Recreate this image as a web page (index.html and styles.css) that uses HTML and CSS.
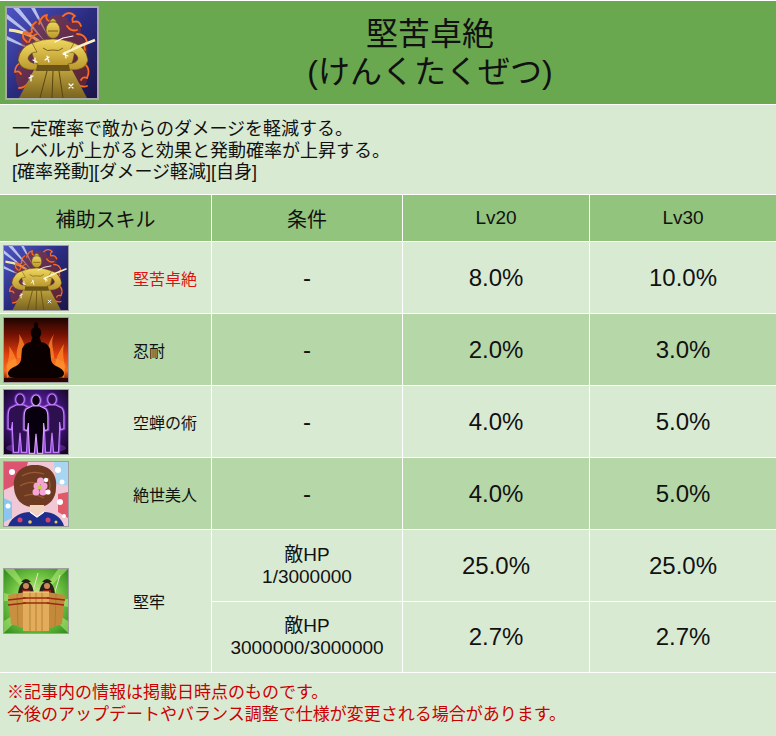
FILE: index.html
```html
<!DOCTYPE html>
<html lang="ja">
<head>
<meta charset="utf-8">
<title>堅苦卓絶</title>
<link rel="stylesheet" href="styles.css">
</head>
<body>
<svg class="defs" aria-hidden="true" width="0" height="0">
  <defs>
    <linearGradient id="nbg" x1="0" y1="0" x2="1" y2="1">
      <stop offset="0" stop-color="#4d55c4"/>
      <stop offset=".5" stop-color="#2a2b7e"/>
      <stop offset="1" stop-color="#1c1648"/>
    </linearGradient>
    <linearGradient id="ngold" x1="0" y1="0" x2="0" y2="1">
      <stop offset="0" stop-color="#f0d860"/>
      <stop offset="1" stop-color="#b8962c"/>
    </linearGradient>
    <linearGradient id="nhak" x1="0" y1="0" x2="0" y2="1">
      <stop offset="0" stop-color="#c2a63e"/>
      <stop offset="1" stop-color="#7a6420"/>
    </linearGradient>
    <linearGradient id="gnin" x1="0" y1="0" x2="0" y2="1">
      <stop offset="0" stop-color="#1c0500"/>
      <stop offset=".28" stop-color="#7a1203"/>
      <stop offset=".58" stop-color="#e2410e"/>
      <stop offset=".82" stop-color="#f56c1e"/>
      <stop offset="1" stop-color="#5a0c02"/>
    </linearGradient>
    <radialGradient id="gutsu" cx=".5" cy=".45" r=".7">
      <stop offset="0" stop-color="#7a34c0"/>
      <stop offset=".6" stop-color="#3a1470"/>
      <stop offset="1" stop-color="#14041f"/>
    </radialGradient>
    <radialGradient id="gken" cx=".5" cy=".5" r=".7">
      <stop offset="0" stop-color="#dcf8a6"/>
      <stop offset=".5" stop-color="#7ccc4a"/>
      <stop offset="1" stop-color="#2c8a1c"/>
    </radialGradient>
    <path id="fig" d="M-4 5 A4 5 0 1 1 4 5 A4 5 0 1 1 -4 5 Z M-3 10 L3 10 L9 13 Q11 15 11 21 L11 32 L8 33 L7 26 L7 34 L6 54 L1.5 54 L0 36 L-1.5 54 L-6 54 L-7 34 L-7 26 L-8 33 L-11 32 L-11 21 Q-11 15 -9 13 Z"/>
  </defs>
  <symbol id="nio" viewBox="0 0 90 90">
    <rect width="90" height="90" fill="url(#nbg)"/>
    <g fill="#dfe8ff" opacity=".75">
      <polygon points="0,6 40,40 0,11"/>
      <polygon points="6,0 40,36 12,0"/>
      <polygon points="24,0 42,30 28,0"/>
      <polygon points="0,28 30,44 0,32"/>
    </g>
    <path d="M2 22 C20 24 30 30 36 38" stroke="#f6e7a0" stroke-width="3" fill="none"/>
    <path fill="#a8300e" opacity=".45" d="M16 40 C10 30 18 18 26 22 C26 12 36 6 42 10 C48 4 60 6 62 14 C70 10 78 18 72 28 C82 32 82 46 78 52 C84 60 82 74 76 80 L14 82 C6 74 8 62 14 56 C8 50 10 44 16 40Z"/>
    <g fill="none" stroke="#ff6a1e" stroke-width="1.8" stroke-linecap="round" stroke-linejoin="round">
      <path d="M20 34 q-6 -4 -3 -10 q4 4 8 0 q-2 -6 4 -10"/>
      <path d="M32 16 q2 -8 8 -9 q-2 4 2 6"/>
      <path d="M56 8 q6 -6 12 0 q-4 2 -2 6 q6 -2 8 4"/>
      <path d="M70 26 q8 0 10 8 q-4 2 -2 8"/>
      <path d="M16 54 q-8 2 -8 10 q4 -2 6 2"/>
      <path d="M78 56 q6 6 2 14 q-4 -2 -6 2"/>
      <path d="M22 74 q-4 6 -10 6"/>
      <path d="M70 76 q6 4 10 2"/>
      <path d="M60 18 q4 6 10 4"/>
      <path d="M30 26 q-6 2 -8 8"/>
    </g>
    <path d="M28 60 L64 60 L80 90 L12 90Z" fill="url(#nhak)"/>
    <g fill="url(#ngold)" stroke="#5a4410" stroke-width=".6">
      <path d="M25 35 Q46 27 67 35 Q69 46 64 58 L30 58 Q23 46 25 35Z"/>
      <path d="M25 35 Q13 39 11 52 Q13 63 30 62 L31 56 Q21 55 21 50 Q23 44 30 44Z"/>
      <path d="M67 35 Q79 39 81 52 Q79 63 62 62 L61 56 Q71 55 71 50 Q69 44 62 44Z"/>
      <ellipse cx="46" cy="22" rx="7" ry="8.5"/>
      <path d="M42 14 Q46 7 50 14Z"/>
    </g>
    <path d="M30 57 L62 57 L63 63 L29 63Z" fill="#6a5416"/>
    <g stroke="#5a4610" stroke-width="1">
      <line x1="40" y1="63" x2="33" y2="90"/>
      <line x1="52" y1="63" x2="56" y2="90"/>
      <line x1="46" y1="63" x2="45" y2="90"/>
    </g>
    <path d="M36 40 Q40 44 46 42 Q52 44 56 40" stroke="#7a6018" fill="none"/>
    <path d="M41 23 h10" stroke="#7a5a10"/>
    <path d="M88 32 Q72 38 56 46" stroke="#f8f0c0" stroke-width="2.5" fill="none"/>
    <g stroke="#fff" stroke-width="1.2" stroke-linecap="round" fill="none">
      <path d="M38 52 l4 -3 M40 48 l2 6"/>
      <path d="M56 46 l5 2 M58 44 l1 6"/>
      <path d="M22 70 l4 -2 M24 67 l0 6"/>
      <path d="M62 80 l4 -4 M62 76 l4 4"/>
      <path d="M26 52 l4 2 M28 50 l0 5"/>
      <path d="M48 34 l8 -4 l10 -2"/>
    </g>
  </symbol>
</svg>

<div class="skill">
  <div class="head">
    <div class="hicon"><svg viewBox="0 0 90 90"><use href="#nio"/></svg></div>
    <div class="title">堅苦卓絶<br>(けんくたくぜつ)</div>
  </div>

  <div class="desc">一定確率で敵からのダメージを軽減する。<br>レベルが上がると効果と発動確率が上昇する。<br>[確率発動][ダメージ軽減][自身]</div>

  <div class="tbl">
    <div class="th">補助スキル</div>
    <div class="th">条件</div>
    <div class="th lv">Lv20</div>
    <div class="th lv">Lv30</div>

    <div class="c name">
      <span class="ico"><svg viewBox="0 0 90 90"><use href="#nio"/></svg></span>
      <span class="nm red">堅苦卓絶</span>
    </div>
    <div class="c num">-</div>
    <div class="c num">8.0%</div>
    <div class="c num">10.0%</div>

    <div class="c alt name">
      <span class="ico"><svg viewBox="0 0 64 64">
        <rect width="64" height="64" fill="url(#gnin)"/>
        <g fill="#ff8a2a" opacity=".75">
          <path d="M3 60 C1 46 7 40 5 28 C12 38 14 44 12 52Z"/>
          <path d="M60 60 C63 46 57 40 60 26 C52 38 50 46 52 54Z"/>
          <path d="M13 40 C11 30 17 26 15 16 C22 26 22 34 20 40Z"/>
          <path d="M50 40 C50 30 46 26 50 16 C43 26 43 34 45 40Z"/>
        </g>
        <ellipse cx="32" cy="48" rx="30" ry="10" fill="#ffb040" opacity=".3"/>
        <g fill="#0a0000">
          <ellipse cx="32" cy="7" rx="2.2" ry="2.8"/>
          <ellipse cx="32" cy="15" rx="5.2" ry="6.2"/>
          <path d="M28 20 L36 20 L37 24 Q44 25 46 31 L47 42 Q48 46 52 48 Q60 51 60 56 Q59 60 52 60 L12 60 Q5 60 4 56 Q4 51 12 48 Q16 46 17 42 L18 31 Q20 25 27 24 Z"/>
        </g>
        <rect y="60" width="64" height="4" fill="#2a0400"/>
      </svg></span>
      <span class="nm">忍耐</span>
    </div>
    <div class="c alt num">-</div>
    <div class="c alt num">2.0%</div>
    <div class="c alt num">3.0%</div>

    <div class="c name">
      <span class="ico"><svg viewBox="0 0 64 64">
        <rect width="64" height="64" fill="url(#gutsu)"/>
        <ellipse cx="32" cy="58" rx="30" ry="6" fill="#8a3ad8" opacity=".45"/>
        <g fill="none" stroke="#b060ff" stroke-width="3" opacity=".45">
          <use href="#fig" transform="translate(16 4) scale(1.08)"/>
          <use href="#fig" transform="translate(48 4) scale(1.08)"/>
        </g>
        <g fill="#2e1050" stroke="#c27cff" stroke-width="1.1">
          <use href="#fig" transform="translate(16 4) scale(1.08)"/>
          <use href="#fig" transform="translate(48 4) scale(1.08)"/>
        </g>
        <use href="#fig" transform="translate(32 5) scale(1.08)" fill="none" stroke="#b060ff" stroke-width="3" opacity=".5"/>
        <use href="#fig" transform="translate(32 5) scale(1.08)" fill="#08000e" stroke="#d69aff" stroke-width="1.1"/>
      </svg></span>
      <span class="nm">空蝉の術</span>
    </div>
    <div class="c num">-</div>
    <div class="c num">4.0%</div>
    <div class="c num">5.0%</div>

    <div class="c alt name">
      <span class="ico"><svg viewBox="0 0 64 64">
        <rect width="64" height="64" fill="#f0c8d6"/>
        <path d="M0 0 H24 L18 20 L0 28Z" fill="#dc5470"/>
        <path d="M64 0 V24 L52 22 L50 0Z" fill="#a8d6f2"/>
        <path d="M64 30 V56 L54 50 L54 32Z" fill="#e05a6a"/>
        <path d="M0 36 V60 L8 56 L8 40Z" fill="#8cc6ee"/>
        <g fill="#fff">
          <circle cx="8" cy="10" r="3"/><circle cx="12" cy="24" r="2.5"/>
          <circle cx="54" cy="8" r="3"/><circle cx="58" cy="20" r="2.5"/>
          <circle cx="56" cy="40" r="3"/><circle cx="4" cy="44" r="2.5"/>
          <circle cx="60" cy="54" r="2"/>
        </g>
        <path d="M10 26 C8 9 21 2 32 3 C45 3 54 12 52 26 C52 37 45 43 38 45 L26 45 C17 43 11 37 10 26Z" fill="#6e3b22"/>
        <g fill="none" stroke="#9a5a34" stroke-width="1.3">
          <path d="M18 14 Q28 8 40 12"/>
          <path d="M16 24 Q26 18 34 22"/>
          <path d="M20 34 Q30 30 40 36"/>
          <path d="M44 16 Q48 24 44 32"/>
        </g>
        <path d="M26 43 L40 43 L42 52 L24 52Z" fill="#f1d3c2"/>
        <path d="M4 64 C8 54 18 50 26 50 L33 55 L40 50 C50 50 58 56 60 64Z" fill="#1e2e8c"/>
        <g fill="#d8426a"><circle cx="16" cy="58" r="2.5"/><circle cx="44" cy="58" r="2.5"/></g>
        <g fill="#e8c85a"><circle cx="26" cy="60" r="1.8"/><circle cx="52" cy="60" r="1.5"/></g>
        <path d="M26 50 L33 55 L40 50" stroke="#fff" stroke-width="1.2" fill="none"/>
        <g fill="#f3a6d6">
          <circle cx="33" cy="24" r="3.5"/><circle cx="40" cy="24" r="3.5"/>
          <circle cx="36.5" cy="19" r="3.5"/><circle cx="32" cy="30" r="3.5"/><circle cx="39" cy="30" r="3.5"/>
        </g>
        <g fill="#fff"><circle cx="44" cy="30" r="2.6"/><circle cx="42" cy="18" r="2.2"/></g>
        <circle cx="36" cy="25.5" r="2.2" fill="#c8d040"/>
      </svg></span>
      <span class="nm">絶世美人</span>
    </div>
    <div class="c alt num">-</div>
    <div class="c alt num">4.0%</div>
    <div class="c alt num">5.0%</div>

    <div class="c name span2">
      <span class="ico"><svg viewBox="0 0 64 64">
        <rect width="64" height="64" fill="url(#gken)"/>
        <g fill="#b8f07a" opacity=".55">
          <polygon points="32,32 0,0 10,0"/>
          <polygon points="32,32 64,0 54,0"/>
          <polygon points="32,32 0,64 0,52"/>
          <polygon points="32,32 64,64 64,52"/>
          <polygon points="32,32 0,24 0,32"/>
          <polygon points="32,32 64,30 64,38"/>
        </g>
        <g stroke="#ece4c4" stroke-width="1"><line x1="28" y1="26" x2="34" y2="4"/><line x1="50" y1="26" x2="56" y2="6"/></g>
        <g fill="#2a2018">
          <path d="M14 28 Q14 14 22 12 Q30 14 30 28Z"/>
          <path d="M35 28 Q35 14 43 12 Q51 14 51 28Z"/>
          <path d="M17 13 Q22 7 27 13Z"/>
          <path d="M38 13 Q43 7 48 13Z"/>
        </g>
        <g fill="#c88a5a"><circle cx="22" cy="17" r="3"/><circle cx="43" cy="17" r="3"/></g>
        <g fill="#8a2418"><rect x="18" y="21" width="8" height="5"/><rect x="39" y="21" width="8" height="5"/></g>
        <path d="M4 26 L22 23 L22 60 L7 55Z" fill="#c89040"/>
        <path d="M43 23 L61 26 L58 55 L43 60Z" fill="#c48a3c"/>
        <path d="M19 23 L45 23 L45 62 L19 62Z" fill="#e2ac5a"/>
        <g stroke="#a87830" stroke-width=".8">
          <line x1="26" y1="23" x2="26" y2="62"/>
          <line x1="32" y1="23" x2="32" y2="62"/>
          <line x1="38" y1="23" x2="38" y2="62"/>
          <line x1="13" y1="25" x2="14" y2="57"/>
          <line x1="52" y1="25" x2="51" y2="57"/>
        </g>
        <g stroke="#9a2a10" stroke-width="1.5">
          <line x1="4" y1="31" x2="22" y2="29"/><line x1="4" y1="36" x2="22" y2="34"/>
          <line x1="19" y1="29" x2="45" y2="29"/><line x1="19" y1="34" x2="45" y2="34"/>
          <line x1="43" y1="29" x2="61" y2="31"/><line x1="43" y1="34" x2="60" y2="36"/>
        </g>
        <path d="M19 23 L45 23" stroke="#f4cc80" stroke-width="1.2"/>
      </svg></span>
      <span class="nm">堅牢</span>
    </div>
    <div class="c cond">敵HP<br>1/3000000</div>
    <div class="c num">25.0%</div>
    <div class="c num">25.0%</div>
    <div class="c cond">敵HP<br>3000000/3000000</div>
    <div class="c num">2.7%</div>
    <div class="c num">2.7%</div>
  </div>

  <div class="note">※記事内の情報は掲載日時点のものです。<br>今後のアップデートやバランス調整で仕様が変更される場合があります。</div>
</div>
</body>
</html>
```
FILE: styles.css
```css
html, body {
  margin: 0;
  padding: 0;
  background: #ffffff;
}

body {
  font-family: "Liberation Sans", "Noto Sans CJK JP", sans-serif;
  color: #111111;
}

.defs {
  position: absolute;
  width: 0;
  height: 0;
  overflow: hidden;
}

.skill {
  display: flex;
  flex-direction: column;
  gap: 1px;
  padding-top: 1px;
  min-height: 736px;
  box-sizing: border-box;
  background: #ffffff;
}

.head {
  height: 103px;
  background: #6aa84f;
  display: flex;
  align-items: center;
}

.hicon {
  width: 90px;
  height: 90px;
  border: 2px solid #a9a9a9;
  margin-left: 5px;
  flex: none;
}

.hicon svg,
.ico svg {
  display: block;
  width: 100%;
  height: 100%;
}

.title {
  flex: 1;
  text-align: center;
  font-size: 32px;
  line-height: 38px;
  padding-right: 15px;
}

.desc {
  height: 89px;
  box-sizing: border-box;
  background: #d9ead3;
  padding: 14px 12px 0;
  font-size: 18px;
  line-height: 21.5px;
}

.tbl {
  display: grid;
  grid-template-columns: 211px 190px 186px 186px;
  grid-template-rows: 46px repeat(5, 71px) 70px;
  gap: 1px;
  background: #ffffff;
}

.th {
  background: #93c47d;
  display: flex;
  align-items: center;
  justify-content: center;
  font-size: 20px;
}

.th.lv {
  font-size: 19px;
}

.c {
  background: #d9ead3;
  display: flex;
  align-items: center;
  justify-content: center;
}

.c.alt {
  background: #b6d7a8;
}

.name {
  justify-content: flex-start;
  font-size: 16px;
}

.span2 {
  grid-row: span 2;
}

.ico {
  width: 64px;
  height: 64px;
  border: 1px solid #9e9e9e;
  margin-left: 3px;
  flex: none;
}

.nm {
  margin-left: 64px;
}

.red {
  color: #e01010;
}

.num {
  font-size: 24px;
}

.cond {
  flex-direction: column;
  text-align: center;
  font-size: 19px;
  line-height: 22px;
}

.note {
  flex: 1;
  background: #d9ead3;
  color: #cc0000;
  font-size: 17px;
  line-height: 22px;
  padding: 9px 7px;
}
```
